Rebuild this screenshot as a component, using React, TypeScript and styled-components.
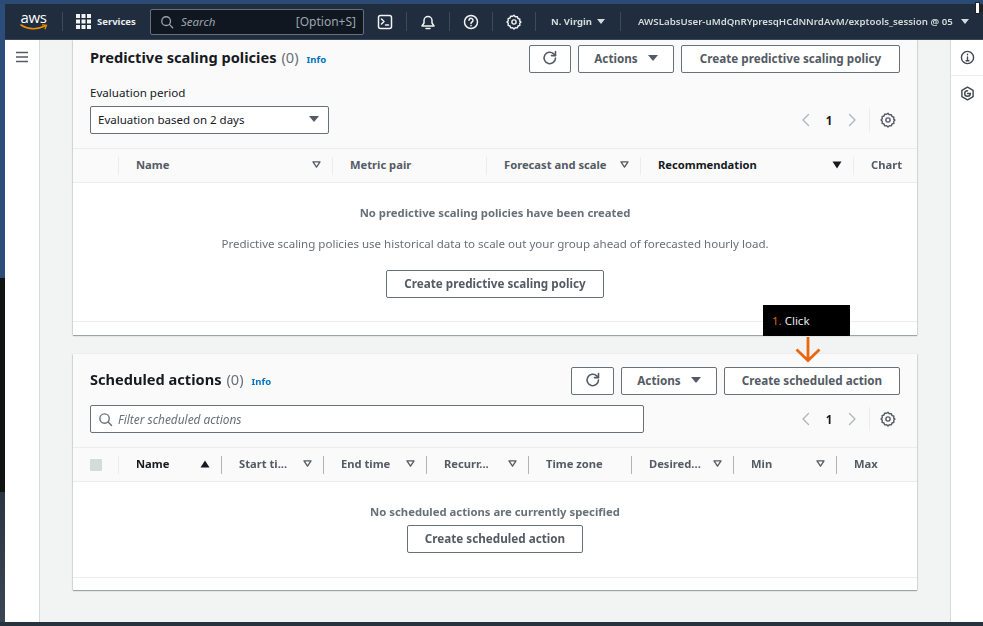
import React from "react";
import styled, { createGlobalStyle } from "styled-components";

const Global = createGlobalStyle`
  html, body { margin: 0; padding: 0; width: 983px; height: 626px; overflow: hidden; background: #232f3e; }
  * { box-sizing: border-box; }
  #root { width: 983px; height: 626px; font-family: "Noto Sans", "Open Sans", Arial, sans-serif; }
`;

const Desktop = styled.div`
  width: 983px; height: 626px; display: flex; flex-direction: column; position: relative;
  filter: blur(0.45px);
`;
const TopBand = styled.div`height: 4px; background: #2b4a76; flex: none;`;
const BottomBand = styled.div`height: 4px; background: #27323f; flex: none;`;
const Middle = styled.div`flex: 1; display: flex; min-height: 0;`;
const LeftEdge = styled.div`width: 5px; flex: none; display: flex; flex-direction: column;`;
const EdgeBlue = styled.div`height: 274px; background: #2c4c79;`;
const EdgeBlack = styled.div`height: 214px; background: #111313;`;
const EdgeSlate = styled.div`flex: 1; background: linear-gradient(#2b3541, #3a4653);`;
const Window = styled.div`flex: 1; min-width: 0; display: flex; flex-direction: column; position: relative;`;

const Nav = styled.header`
  height: 36px; flex: none; background: #1f2d3e; display: flex; align-items: center; color: #e9ebed;
  border-bottom: 1px solid #3a4756;
`;
const Logo = styled.div`width: 57px; flex: none; display: flex; flex-direction: column; align-items: center;`;
const LogoWord = styled.span`font-size: 15px; line-height: 13px; font-weight: 500; letter-spacing: -0.3px; color: #fff; font-family: "Open Sans", sans-serif; margin-top: -1px;`;
const NavDivider = styled.span<{ $m?: string }>`width: 1px; height: 19px; background: #3c4a5a; flex: none; margin: ${(p) => p.$m || "0"};`;
const ServicesLabel = styled.span`font-size: 9.5px; font-weight: 700; margin-left: 6px; color: #e9ebed; width: 53px; flex: none;`;
const NavSearch = styled.div`
  width: 214px; height: 26px; flex: none; background: #101720; border: 1px solid #66717d; border-radius: 2px;
  display: flex; align-items: center; padding: 0 7px 0 9px; color: #9ba5ae; font-size: 12px;
`;
const NavSearchHint = styled.span`font-style: italic; font-size: 11.5px; margin-left: 7px; flex: 1;`;
const NavIconSlot = styled.div`width: 42px; flex: none; display: flex; justify-content: center; align-items: center; color: #f2f3f3;`;
const Region = styled.span`font-size: 9.5px; font-weight: 700; margin-left: 15px; width: 41px; flex: none; color: #d5dbdb; white-space: nowrap;`;
const Account = styled.span`font-size: 9.7px; font-weight: 600; margin-left: 17px; width: 323px; flex: none; white-space: nowrap; color: #d5dbdb;`;
const Caret = styled.span<{ $c?: string; $s?: number }>`
  width: 0; height: 0; flex: none; display: inline-block;
  border-left: ${(p) => p.$s ?? 4}px solid transparent; border-right: ${(p) => p.$s ?? 4}px solid transparent;
  border-top: ${(p) => (p.$s ?? 4) + 1}px solid ${(p) => p.$c || "#d5dbdb"};
`;
const CaretWrap = styled.span<{ $m: string }>`display: inline-flex; margin: ${(p) => p.$m};`;

const Body = styled.div`flex: 1; display: flex; min-height: 0;`;
const Sidebar = styled.aside`width: 35px; flex: none; background: #fff; border-right: 1px solid #d5dbdb; display: flex; justify-content: center; padding: 11px 0 0 0; color: #545b64;`;
const Main = styled.main`width: 910px; flex: none; background: #f2f3f3; padding: 0 33px; overflow: hidden; display: flex; flex-direction: column; gap: 19px;`;
const RightRail = styled.aside`flex: 1; background: #fff; border-left: 1px solid #d5dbdb; display: flex; flex-direction: column;`;
const RailItem = styled.div<{ $h: number }>`height: ${(p) => p.$h}px; display: flex; align-items: center; justify-content: center; color: #414750;`;
const RailLine = styled.div`height: 1px; background: #eaeded;`;

const Card = styled.section`background: #fff; box-shadow: 0 1px 1px rgba(0, 28, 36, 0.35), 1px 0 1px rgba(0,28,36,.08), -1px 0 1px rgba(0,28,36,.08); flex: none;`;
const CardHead = styled.div<{ $p: string; $gap: number }>`background: #fafafa; padding: ${(p) => p.$p}; display: flex; flex-direction: column; gap: ${(p) => p.$gap}px;`;
const TitleRow = styled.div`display: flex; align-items: center; height: 28px;`;
const Title = styled.h2`margin: -4px 0 0; font-size: 14.6px; line-height: 20px; font-weight: 700; color: #16191f; white-space: nowrap;`;
const Count = styled.span`font-weight: 400; color: #687078; margin-left: 5px;`;
const Info = styled.span`font-size: 9.5px; font-weight: 700; color: #0073bb; margin-left: 8px;`;
const Spacer = styled.div`flex: 1;`;
const Buttons = styled.div`display: flex; gap: 7px;`;
const Button = styled.button<{ $w: number }>`
  width: ${(p) => p.$w}px; height: 28px; background: #fff; border: 1px solid #687078; border-radius: 2px; padding: 0 0 2px;
  font: 700 11.7px "Noto Sans", sans-serif; color: #545b64; display: flex; align-items: center; justify-content: center; gap: 10px; white-space: nowrap;
`;
const Label = styled.div`font-size: 11.6px; line-height: 16px; color: #16191f; margin-top: 12px;`;
const ControlRow = styled.div<{ $mt?: number }>`display: flex; align-items: center; justify-content: space-between; margin-top: ${(p) => p.$mt ?? 0}px;`;
const Select = styled.div`width: 239px; height: 28px; background: #fff; border: 1px solid #687078; border-radius: 2px; display: flex; align-items: center; justify-content: space-between; padding: 0 9px 2px 7px; font-size: 11.5px; color: #16191f;`;
const Filter = styled.div`width: 554px; height: 28px; background: #fff; border: 1px solid #687078; border-radius: 2px; display: flex; align-items: center; padding: 0 7px; color: #687078; font-size: 11.9px; font-style: italic; gap: 5px;`;
const Pager = styled.div`display: flex; align-items: center; color: #aab7b8; width: 98px; flex: none; margin-right: 4px;`;
const PageNum = styled.span`font-size: 11.5px; font-weight: 700; color: #16191f; width: 30px; text-align: center;`;
const PagerLine = styled.span`width: 1px; height: 24px; background: #eaeded; margin: 0 10px 0 9px;`;
const GearSlot = styled.span`display: flex; color: #545b64;`;

const TableHead = styled.div`display: flex; height: 35px; background: #fafafa; border-top: 1px solid #eaeded; border-bottom: 1px solid #eaeded; align-items: center;`;
const CheckCol = styled.div`width: 46px; flex: none; padding-left: 17px; height: 18px; display: flex; align-items: center; border-right: 1px solid #eaeded;`;
const CheckBox = styled.span`width: 12px; height: 12px; background: #d5dbdb; border-radius: 1px;`;
const Col = styled.div<{ $w: number; $line: boolean; $active?: boolean }>`
  width: ${(p) => p.$w}px; flex: none; height: 18px; display: flex; align-items: center; justify-content: space-between;
  padding: 0 11px 2px 17px; font-size: 11.2px; font-weight: 700; white-space: nowrap;
  color: ${(p) => (p.$active ? "#16191f" : "#545b64")};
  border-right: 1px solid ${(p) => (p.$line ? "#aab7b8" : "#eaeded")};
  &:last-child { border-right: 0; }
`;
const Empty = styled.div<{ $h: number }>`height: ${(p) => p.$h}px; padding-top: 22px; display: flex; flex-direction: column; align-items: center; background: #fff;`;
const EmptyTitle = styled.div`font-size: 11.3px; line-height: 16px; font-weight: 700; color: #687078;`;
const EmptyText = styled.div`font-size: 11.55px; line-height: 16px; color: #687078; margin-top: 15px;`;
const EmptyButton = styled(Button)<{ $mt: number }>`margin-top: ${(p) => p.$mt}px;`;
const CardFoot = styled.div<{ $h: number }>`height: ${(p) => p.$h}px; background: #fff; border-top: 1px solid #eaeded;`;

const Tooltip = styled.div`position: absolute; left: 758px; top: 301px; width: 87px; height: 31px; background: #000; color: #e9ebed; font-size: 11.5px; padding: 8px 0 0 9px; line-height: 15px;`;
const Step = styled.span`color: #d9661f;`;
const ArrowWrap = styled.div`position: absolute; left: 789px; top: 333px; display: flex; color: #ec6511;`;
const CornerGlyph = styled.div`position: absolute; right: 0; top: 2px; display: flex;`;

const I = ({ s = 16, children, sw = 1.5 }: { s?: number; children: React.ReactNode; sw?: number }) => (
  <svg width={s} height={s} viewBox="0 0 16 16" fill="none" stroke="currentColor" strokeWidth={sw} strokeLinecap="round" strokeLinejoin="round">{children}</svg>
);
const SearchIcon = ({ s = 15 }: { s?: number }) => <I s={s}><circle cx="7" cy="7" r="5" /><path d="M11 11l3.5 3.5" /></I>;
const Refresh = () => <I s={16} sw={1.6}><path d="M13.5 8a5.7 5.7 0 1 1-1.8-4.2L13.5 5.5" /><path d="M13.5 1.6v4h-4" /></I>;
const Gear = () => (
  <I s={16} sw={1.4}>
    <circle cx="8" cy="8" r="2.1" />
    <path d="M8 1.3l1.3 1.5 2-.2.7 1.9 1.9.7-.2 2L15 8l-1.3 1.3.2 2-1.9.7-.7 1.9-2-.2L8 15l-1.3-1.3-2 .2-.7-1.9-1.9-.7.2-2L1 8l1.3-1.3-.2-2 1.9-.7.7-1.9 2 .2z" />
  </I>
);
const Chevron = ({ dir }: { dir: "l" | "r" }) => <I s={16} sw={1.3}><path d={dir === "l" ? "M10.5 2.5L5 8l5.5 5.5" : "M5.5 2.5L11 8l-5.5 5.5"} /></I>;
const SortDown = () => <svg width="9" height="7" viewBox="0 0 10 8"><path d="M1 1h8L5 7z" fill="none" stroke="#545b64" strokeWidth="1.5" strokeLinejoin="round" /></svg>;
const SortFilled = ({ up }: { up?: boolean }) => <svg width="10" height="8" viewBox="0 0 10 8"><path d={up ? "M0.5 7.5h9L5 0.5z" : "M0.5 0.5h9L5 7.5z"} fill="#16191f" /></svg>;

const Pagination = () => (
  <Pager>
    <Chevron dir="l" /><PageNum>1</PageNum><Chevron dir="r" /><PagerLine /><GearSlot><Gear /></GearSlot>
  </Pager>
);

type C = { t: string; w: number; icon?: "down" | "up" | "filled"; active?: boolean };
const Head = ({ cols, line, check }: { cols: C[]; line: boolean; check: boolean }) => (
  <TableHead>
    <CheckCol>{check && <CheckBox />}</CheckCol>
    {cols.map((c) => (
      <Col key={c.t} $w={c.w} $line={line} $active={c.active}>
        <span>{c.t}</span>
        {c.icon === "down" && <SortDown />}
        {c.icon === "up" && <SortFilled up />}
        {c.icon === "filled" && <SortFilled />}
      </Col>
    ))}
  </TableHead>
);

const c1: C[] = [
  { t: "Name", w: 214, icon: "down" },
  { t: "Metric pair", w: 154 },
  { t: "Forecast and scale", w: 154, icon: "down" },
  { t: "Recommendation", w: 213, icon: "filled", active: true },
  { t: "Chart", w: 63 },
];
const c2: C[] = [
  { t: "Name", w: 103, icon: "up", active: true },
  { t: "Start ti...", w: 102, icon: "down" },
  { t: "End time", w: 103, icon: "down" },
  { t: "Recurr...", w: 102, icon: "down" },
  { t: "Time zone", w: 103 },
  { t: "Desired...", w: 102, icon: "down" },
  { t: "Min", w: 103, icon: "down" },
  { t: "Max", w: 80 },
];

export default function App() {
  return (
    <>
      <Global />
      <Desktop>
        <TopBand />
        <Middle>
          <LeftEdge><EdgeBlue /><EdgeBlack /><EdgeSlate /></LeftEdge>
          <Window>
            <Nav>
              <Logo>
                <LogoWord>aws</LogoWord>
                <svg width="28" height="7" viewBox="0 0 28 7" fill="none">
                  <path d="M1 1c7 4.5 16 4.5 24 1" stroke="#f29100" strokeWidth="1.5" strokeLinecap="round" />
                  <path d="M22.5 0.8l4 .4-1.4 3.6" stroke="#f29100" strokeWidth="1.2" strokeLinecap="round" />
                </svg>
              </Logo>
              <NavDivider $m="0 13px 0 0" />
              <svg width="15" height="15" viewBox="0 0 15 15" fill="#f2f3f3">
                {[0, 5.5, 11].flatMap((x) => [0, 5.5, 11].map((y) => <rect key={`${x}-${y}`} x={x} y={y} width="4" height="4" />))}
              </svg>
              <ServicesLabel>Services</ServicesLabel>
              <NavSearch>
                <SearchIcon s={14} />
                <NavSearchHint>Search</NavSearchHint>
                <span>[Option+S]</span>
              </NavSearch>
              <NavIconSlot>
                <I s={16} sw={1.5}><rect x="1.5" y="1.5" width="13" height="13" rx="2" /><path d="M4.5 5l2.5 2.5-2.5 2.5M8.5 11h3" /></I>
              </NavIconSlot>
              <NavDivider />
              <NavIconSlot>
                <I s={16} sw={1.5}><path d="M2 12h12l-2-3V6.5a4 4 0 0 0-8 0V9z" /><path d="M6 14.5h4" /></I>
              </NavIconSlot>
              <NavDivider />
              <NavIconSlot>
                <I s={16} sw={1.5}><circle cx="8" cy="8" r="6.5" /><path d="M6 6.2a2 2 0 1 1 3 1.8c-.7.4-1 .8-1 1.5M8 11.5v.3" /></I>
              </NavIconSlot>
              <NavDivider />
              <NavIconSlot><Gear /></NavIconSlot>
              <NavDivider />
              <Region>N. Virgin</Region>
              <CaretWrap $m="0 15px 0 5px"><Caret /></CaretWrap>
              <NavDivider />
              <Account>AWSLabsUser-uMdQnRYpresqHCdNNrdAvM/exptools_session @ 05</Account>
              <Caret />
            </Nav>
            <Body>
              <Sidebar>
                <svg width="14" height="12" viewBox="0 0 14 12" stroke="currentColor" strokeWidth="1.4"><path d="M1 1.5h12M1 6h12M1 10.5h12" /></svg>
              </Sidebar>
              <Main>
                <Card>
                  <CardHead $p="5px 17px 14px" $gap={0}>
                    <TitleRow>
                      <Title>Predictive scaling policies<Count>(0)</Count></Title>
                      <Info>Info</Info>
                      <Spacer />
                      <Buttons>
                        <Button $w={42}><Refresh /></Button>
                        <Button $w={96}>Actions<Caret $c="#545b64" $s={5} /></Button>
                        <Button $w={219}>Create predictive scaling policy</Button>
                      </Buttons>
                    </TitleRow>
                    <Label>Evaluation period</Label>
                    <ControlRow $mt={5}>
                      <Select>Evaluation based on 2 days<Caret $c="#545b64" $s={5} /></Select>
                      <Pagination />
                    </ControlRow>
                  </CardHead>
                  <Head cols={c1} line={false} check={false} />
                  <Empty $h={138}>
                    <EmptyTitle>No predictive scaling policies have been created</EmptyTitle>
                    <EmptyText>Predictive scaling policies use historical data to scale out your group ahead of forecasted hourly load.</EmptyText>
                    <EmptyButton $w={218} $mt={18}>Create predictive scaling policy</EmptyButton>
                  </Empty>
                  <CardFoot $h={14} />
                </Card>
                <Card>
                  <CardHead $p="13px 17px 14px" $gap={10}>
                    <TitleRow>
                      <Title>Scheduled actions<Count>(0)</Count></Title>
                      <Info>Info</Info>
                      <Spacer />
                      <Buttons>
                        <Button $w={43}><Refresh /></Button>
                        <Button $w={96}>Actions<Caret $c="#545b64" $s={5} /></Button>
                        <Button $w={176}>Create scheduled action</Button>
                      </Buttons>
                    </TitleRow>
                    <ControlRow>
                      <Filter><SearchIcon />Filter scheduled actions</Filter>
                      <Pagination />
                    </ControlRow>
                  </CardHead>
                  <Head cols={c2} line check />
                  <Empty $h={95}>
                    <EmptyTitle>No scheduled actions are currently specified</EmptyTitle>
                    <EmptyButton $w={176} $mt={5}>Create scheduled action</EmptyButton>
                  </Empty>
                  <CardFoot $h={13} />
                </Card>
              </Main>
              <RightRail>
                <RailItem $h={35}>
                  <I s={15} sw={1.5}><circle cx="8" cy="8" r="6.5" /><path d="M8 7.5v4M6.5 11.5h3M8 4.500v.5" /></I>
                </RailItem>
                <RailLine />
                <RailItem $h={35}>
                  <I s={15} sw={1.5}><path d="M8 1.2l6 3.4v6.800l-6 3.400-6-3.400V4.600z" /><path d="M11 8a3 3 0 1 1-3-3" /><path d="M8 8h3" /></I>
                </RailItem>
              </RightRail>
            </Body>
            <Tooltip><Step>1.</Step> Click</Tooltip>
            <ArrowWrap>
              <svg width="28" height="26" viewBox="0 0 28 26" fill="none" stroke="currentColor" strokeWidth="2.8" strokeLinejoin="miter">
                <path d="M14 0v23M2.500 12.500L14 23.500l11.500-11" />
              </svg>
            </ArrowWrap>
          </Window>
        </Middle>
        <BottomBand />
        <CornerGlyph>
          <svg width="8" height="12" viewBox="0 0 8 12"><rect x="0.5" y="0.5" width="4" height="11" fill="#fff" stroke="#222" /><rect x="5" y="2" width="3" height="8" fill="#222" /></svg>
        </CornerGlyph>
      </Desktop>
    </>
  );
}
